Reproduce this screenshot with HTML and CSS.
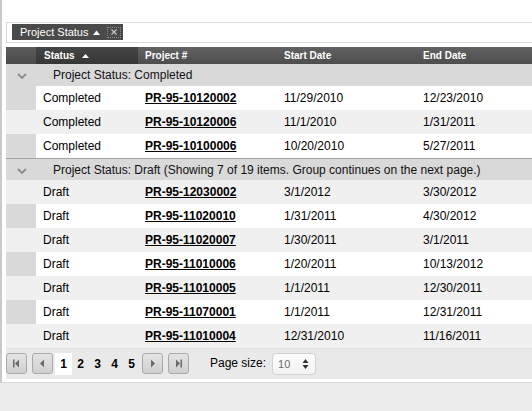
FILE: index.html
```html
<!DOCTYPE html>
<html>
<head>
<meta charset="utf-8">
<link rel="stylesheet" href="styles.css">
</head>
<body>
<div class="frame">
  <div class="group-panel">
    <div class="chip">
      <span class="chip-text">Project Status</span>
      <svg class="chip-arrow" width="7" height="5" viewBox="0 0 7 5"><polygon points="0,5 3.5,0.5 7,5" fill="#fff"/></svg>
      <span class="chip-close"><svg width="8" height="8" viewBox="0 0 8 8"><path d="M1.5 1.5 L6.5 6.5 M6.5 1.5 L1.5 6.5" stroke="#c8c8c8" stroke-width="1.2"/></svg></span>
    </div>
  </div>

  <table class="grid">
    <colgroup>
      <col class="c-ind"><col class="c-status"><col class="c-proj"><col class="c-date"><col class="c-end">
    </colgroup>
    <thead>
      <tr>
        <th class="h-ind"></th>
        <th class="h-sorted">Status <svg class="sort-arrow" width="7" height="4" viewBox="0 0 7 4"><polygon points="0,4 3.5,0 7,4" fill="#fff"/></svg></th>
        <th>Project #</th>
        <th>Start Date</th>
        <th>End Date</th>
      </tr>
    </thead>
    <tbody>
      <tr class="group first-group">
        <td class="ind"><svg width="10" height="6" viewBox="0 0 10 6"><polyline points="1,1 5,5 9,1" fill="none" stroke="#8c8c8c" stroke-width="1.8"/></svg></td>
        <td colspan="4" class="group-text">Project Status: Completed</td>
      </tr>
      <tr class="row"><td class="ind"></td><td>Completed</td><td><a class="link">PR-95-10120002</a></td><td>11/29/2010</td><td>12/23/2010</td></tr>
      <tr class="row alt"><td class="ind"></td><td>Completed</td><td><a class="link">PR-95-10120006</a></td><td>11/1/2010</td><td>1/31/2011</td></tr>
      <tr class="row"><td class="ind"></td><td>Completed</td><td><a class="link">PR-95-10100006</a></td><td>10/20/2010</td><td>5/27/2011</td></tr>
      <tr class="group next-group">
        <td class="ind"><svg width="10" height="6" viewBox="0 0 10 6"><polyline points="1,1 5,5 9,1" fill="none" stroke="#8c8c8c" stroke-width="1.8"/></svg></td>
        <td colspan="4" class="group-text">Project Status: Draft (Showing 7 of 19 items. Group continues on the next page.)</td>
      </tr>
      <tr class="row alt"><td class="ind"></td><td>Draft</td><td><a class="link">PR-95-12030002</a></td><td>3/1/2012</td><td>3/30/2012</td></tr>
      <tr class="row"><td class="ind"></td><td>Draft</td><td><a class="link">PR-95-11020010</a></td><td>1/31/2011</td><td>4/30/2012</td></tr>
      <tr class="row alt"><td class="ind"></td><td>Draft</td><td><a class="link">PR-95-11020007</a></td><td>1/30/2011</td><td>3/1/2011</td></tr>
      <tr class="row"><td class="ind"></td><td>Draft</td><td><a class="link">PR-95-11010006</a></td><td>1/20/2011</td><td>10/13/2012</td></tr>
      <tr class="row alt"><td class="ind"></td><td>Draft</td><td><a class="link">PR-95-11010005</a></td><td>1/1/2011</td><td>12/30/2011</td></tr>
      <tr class="row"><td class="ind"></td><td>Draft</td><td><a class="link">PR-95-11070001</a></td><td>1/1/2011</td><td>12/31/2011</td></tr>
      <tr class="row alt"><td class="ind"></td><td>Draft</td><td><a class="link">PR-95-11010004</a></td><td>12/31/2010</td><td>11/16/2011</td></tr>
    </tbody>
  </table>

  <div class="pager">
    <span class="pbtn"><svg width="9" height="9" viewBox="0 0 9 9"><rect x="1" y="0.5" width="1.5" height="8" fill="#6b6b6b"/><polygon points="7,0.5 3,4.5 7,8.5" fill="#6b6b6b"/></svg></span>
    <span class="pbtn"><svg width="9" height="9" viewBox="0 0 9 9"><polygon points="6,0.5 2,4.5 6,8.5" fill="#6b6b6b"/></svg></span>
    <span class="pages">
      <span class="page current">1</span><span class="page">2</span><span class="page">3</span><span class="page">4</span><span class="page">5</span>
    </span>
    <span class="pbtn"><svg width="9" height="9" viewBox="0 0 9 9"><polygon points="3,0.5 7,4.5 3,8.5" fill="#6b6b6b"/></svg></span>
    <span class="pbtn"><svg width="9" height="9" viewBox="0 0 9 9"><polygon points="2,0.5 6,4.5 2,8.5" fill="#6b6b6b"/><rect x="6.5" y="0.5" width="1.5" height="8" fill="#6b6b6b"/></svg></span>
    <span class="psize-label">Page size:</span>
    <span class="psize">
      <span class="psize-val">10</span>
      <svg class="spin" width="7" height="12" viewBox="0 0 7 12"><polygon points="0.5,5 3.5,1 6.5,5" fill="#333"/><polygon points="0.5,7 3.5,11 6.5,7" fill="#333"/></svg>
    </span>
  </div>
</div>
</body>
</html>
```

FILE: styles.css
```css
html, body {
  margin: 0;
  padding: 0;
  overflow: hidden;
}
body {
  background: #ebebeb;
  font-family: "Liberation Sans", Arial, sans-serif;
  font-size: 12px;
  color: #000;
  width: 532px;
  height: 411px;
}
.frame {
  width: 620px;
  background: #fff;
  border-left: 2px solid #c9c9c9;
  border-bottom: 1px solid #d6d6d6;
  padding: 22px 0 3px 4px;
}
.group-panel {
  border: 1px solid #dadada;
  border-right: none;
  padding: 1px 0 0 5px;
  height: 18px;
}
.chip {
  display: inline-flex;
  align-items: center;
  height: 16px;
  background: #4a4a4a;
  color: #fff;
  font-size: 11px;
  padding: 0 2px 0 8px;
  white-space: nowrap;
  vertical-align: top;
}
.chip-text {
  line-height: 16px;
}
.chip-arrow {
  margin-left: 5px;
}
.chip-close {
  display: inline-flex;
  align-items: center;
  justify-content: center;
  width: 12px;
  height: 9px;
  margin-left: 7px;
  border: 1px dotted #8a8a8a;
}
.grid {
  margin-top: 4px;
  border-collapse: collapse;
  table-layout: fixed;
  width: 560px;
}
.c-ind { width: 30px; }
.c-status { width: 102px; }
.c-proj { width: 139px; }
.c-date { width: 139px; }
.c-end { width: 150px; }
.grid th {
  height: 17px;
  padding: 0 0 0 7px;
  text-align: left;
  color: #fff;
  font-size: 10px;
  font-weight: bold;
  background: linear-gradient(#626262, #4d4d4d);
  white-space: nowrap;
}
.grid th.h-ind {
  padding: 0;
  background: linear-gradient(#5c5c5c, #4a4a4a);
}
.grid th.h-sorted {
  padding-left: 8px;
  background: linear-gradient(#454545, #363636);
}
.sort-arrow {
  margin-left: 5px;
  vertical-align: 1px;
}
.grid td {
  padding: 0 0 0 7px;
  height: 24px;
  white-space: nowrap;
  overflow: hidden;
}
.grid td.ind {
  padding: 0;
  background: #d9d9d9;
  text-align: center;
}
.row td {
  background: #fff;
}
.row.alt td {
  background: #f0f0f0;
}
.group td {
  background: #d9d9d9;
  height: 22px;
}
.group td.ind svg {
  display: block;
  margin: 2px auto 0 11px;
}
.group-text {
  padding-left: 17px !important;
  color: #111;
}
.next-group td {
  border-top: 1px solid #a3a3a3;
  height: 21px;
}
.link {
  font-weight: bold;
  text-decoration: underline;
  color: #000;
}
.pager {
  width: 560px;
  height: 26px;
  background: #e9e9e9;
  border-top: 1px solid #dedede;
  padding: 4px 0 0 0;
  display: flex;
  align-items: flex-start;
}
.pbtn {
  width: 19px;
  height: 19px;
  border: 1px solid #a9a9a9;
  border-radius: 3px;
  background: linear-gradient(#e4e4e4, #cfcfcf);
  display: inline-flex;
  align-items: center;
  justify-content: center;
  margin-right: 5px;
}
.pages {
  display: inline-flex;
  margin: 0 2px 0 -3px;
}
.page {
  width: 17px;
  height: 22px;
  line-height: 22px;
  text-align: center;
  font-weight: bold;
  font-size: 12px;
}
.page.current {
  background: #fff;
}
.psize-label {
  margin-left: 16px;
  line-height: 21px;
}
.psize {
  margin-left: 6px;
  height: 20px;
  border: 1px solid #d2d2d2;
  border-radius: 4px;
  background: linear-gradient(#fdfdfd, #f3f3f3);
  display: inline-flex;
  align-items: center;
  justify-content: space-between;
  padding: 0 6px 0 5px;
  width: 31px;
}
.psize-val {
  color: #6a6a6a;
  font-size: 11px;
}
```
